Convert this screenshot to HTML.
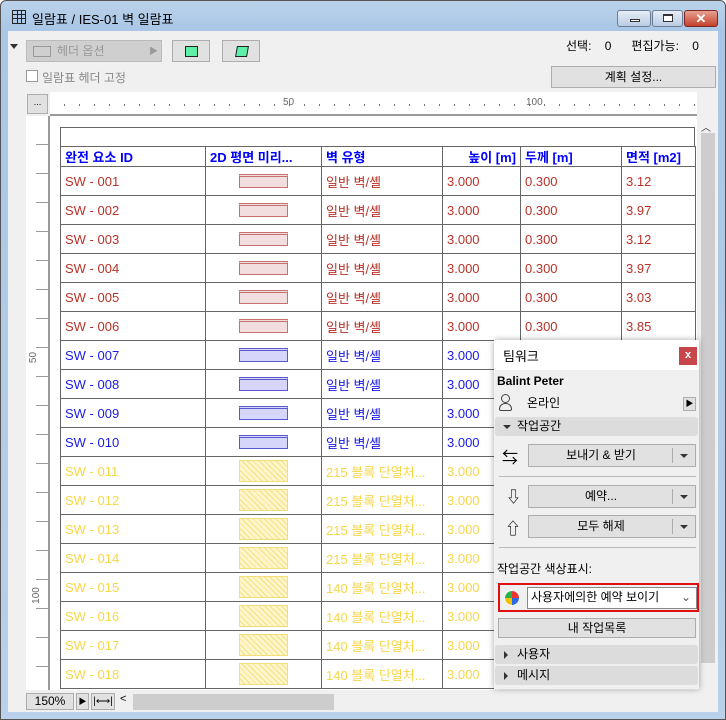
<!DOCTYPE html><html><head><meta charset="utf-8"><style>
*{margin:0;padding:0;box-sizing:border-box}
body{width:726px;height:720px;overflow:hidden;font-family:"Liberation Sans","Noto Sans CJK KR",sans-serif;font-size:12px;background:#fff;position:relative}
.a{position:absolute}
.win{left:0;top:0;width:726px;height:720px;background:linear-gradient(#bcd2ea,#a9c6e6 30px,#b9d1ea);border:1px solid #555;border-radius:6px 6px 0 0}
.btn{background:#e1e1e1;border:1px solid #adadad;text-align:center}
table{border-collapse:collapse;table-layout:fixed;font-size:13px}
td{border:1px solid #666;height:29px;padding:0 4px;white-space:nowrap;overflow:hidden}
tr.h td{height:19px;color:#00f;font-weight:bold;font-size:13px}
.r td{color:#b83228}.b td{color:#1a1ae6}.y td{color:#f7d64a}
.pv{display:block;margin:0 auto;width:49px;height:14px}
.pr{border:1px solid #c87070;background:#f2dede;border-top-width:3px;border-top-style:double}
.pb{border:1px solid #5a5acc;background:#d6d6fa;border-top-width:3px;border-top-style:double}
.py{border:1px solid #f3de7a;background:repeating-linear-gradient(45deg,#fff6cc 0 3px,#f5df80 3px 4px);height:22px}
.sec{background:#dcdcdc;border-radius:3px;height:19px;font-size:12px;padding-left:22px;line-height:19px}
.dd{background:#e1e1e1;border:1px solid #adadad;text-align:center;line-height:21px;font-size:12px}
.dd:after{content:"";position:absolute;right:0;top:3px;width:22px;height:15px;border-left:1px solid #adadad}
.tri{position:absolute;right:7px;top:9px;border:4px solid transparent;border-top:4px solid #333;border-bottom:0}
</style></head><body>
<div class="a win"></div>
<div class="a" style="left:12px;top:10px;width:14px;height:14px;border:1px solid #222;background:linear-gradient(90deg,transparent 4px,#222 4px 5px,transparent 5px 8px,#222 8px 9px,transparent 9px),linear-gradient(transparent 3px,#222 3px 4px,transparent 4px 7px,#222 7px 8px,transparent 8px)"></div>
<div class="a" style="left:32px;top:9px;font-size:13px">일람표 / IES-01 벽 일람표</div>
<div class="a" style="left:617px;top:10px;width:34px;height:17px;border:1px solid #6b7d96;border-radius:3px;background:linear-gradient(#e6eef8,#b9cbe2)"><div class="a" style="left:12px;top:8px;width:10px;height:3px;border:1px solid #333;background:#fff"></div></div>
<div class="a" style="left:652px;top:10px;width:31px;height:17px;border:1px solid #6b7d96;border-radius:3px;background:linear-gradient(#e6eef8,#b9cbe2)"><div class="a" style="left:10px;top:3px;width:10px;height:8px;border:1px solid #333;border-top-width:2px;background:#fff"></div></div>
<div class="a" style="left:684px;top:10px;width:34px;height:17px;border:1px solid #7a2a20;border-radius:3px;background:linear-gradient(#e8a090,#c4412c);color:#fff;text-align:center;font-weight:bold;font-size:13px;line-height:15px">✕</div>
<div class="a" style="left:8px;top:31px;width:710px;height:681px;background:#f0f0f0"></div>
<div class="a" style="left:10px;top:44px;border:4px solid transparent;border-top:5px solid #333"></div>
<div class="a" style="left:26px;top:40px;width:136px;height:22px;background:#cfcfcf;border:1px solid #bbb;color:#999;padding-left:30px;line-height:20px">헤더 옵션<span style="position:absolute;right:3px;top:0;font-size:9px">▶</span><span class="a" style="left:6px;top:5px;width:18px;height:11px;border:1px solid #999"></span></div>
<div class="a btn" style="left:172px;top:40px;width:38px;height:22px"><div class="a" style="left:12px;top:5px;width:13px;height:11px;background:#5ef0a8;border:1px solid #222"></div></div>
<div class="a btn" style="left:222px;top:40px;width:38px;height:22px"><div class="a" style="left:13px;top:5px;width:12px;height:11px;background:#5ef0a8;border:1px solid #222;transform:skewX(-10deg)"></div></div>
<div class="a" style="left:26px;top:70px;width:12px;height:12px;border:1px solid #999;background:#fff"></div>
<div class="a" style="left:42px;top:69px;color:#888">일람표 헤더 고정</div>
<div class="a" style="left:566px;top:37px">선택:&nbsp;&nbsp;&nbsp;&nbsp;0&nbsp;&nbsp;&nbsp;&nbsp;&nbsp;&nbsp;편집가능:&nbsp;&nbsp;&nbsp;&nbsp;0</div>
<div class="a btn" style="left:551px;top:66px;width:165px;height:22px;line-height:20px">계획 설정...</div>
<!-- rulers -->
<div class="a" style="left:50px;top:92px;width:647px;height:24px;background:#fff;border-bottom:2px solid #999;background-image:repeating-linear-gradient(90deg,transparent 0 14px,#777 14px 15px);background-size:100% 2px;background-repeat:no-repeat;background-position:0 12px"></div>
<div class="a" style="left:283px;top:97px;font-size:10px;color:#666">50</div>
<div class="a" style="left:526px;top:97px;font-size:10px;color:#666">100</div>
<div class="a btn" style="left:27px;top:94px;width:21px;height:20px;font-size:9px;line-height:14px">...</div>
<div class="a" style="left:26px;top:116px;width:24px;height:574px;background:#fff;border-right:2px solid #999;background-image:repeating-linear-gradient(transparent 0 28px,#999 28px 29px);background-size:14px 100%;background-repeat:no-repeat;background-position:10px 0"></div>
<div class="a" style="left:28px;top:590px;font-size:10px;color:#666;transform:rotate(-90deg)">100</div>
<div class="a" style="left:28px;top:352px;font-size:10px;color:#666;transform:rotate(-90deg)">50</div>
<div class="a" style="left:50px;top:116px;width:647px;height:574px;background:#fff"></div>
<div class="a" style="left:60px;top:127px;width:635px;height:20px;border:1px solid #666;border-bottom:0"></div>
<table class="a" style="left:60px;top:146px;width:635px">
<colgroup><col style="width:145px"><col style="width:116px"><col style="width:121px"><col style="width:78px"><col style="width:101px"><col style="width:74px"></colgroup>
<tr class="h"><td>완전 요소 ID</td><td>2D 평면 미리...</td><td>벽 유형</td><td style="text-align:right">높이 [m]</td><td>두께 [m]</td><td>면적 [m2]</td></tr>
<tr class="r"><td>SW - 001</td><td><span class="pv pr"></span></td><td>일반 벽/셸</td><td>3.000</td><td>0.300</td><td>3.12</td></tr>
<tr class="r"><td>SW - 002</td><td><span class="pv pr"></span></td><td>일반 벽/셸</td><td>3.000</td><td>0.300</td><td>3.97</td></tr>
<tr class="r"><td>SW - 003</td><td><span class="pv pr"></span></td><td>일반 벽/셸</td><td>3.000</td><td>0.300</td><td>3.12</td></tr>
<tr class="r"><td>SW - 004</td><td><span class="pv pr"></span></td><td>일반 벽/셸</td><td>3.000</td><td>0.300</td><td>3.97</td></tr>
<tr class="r"><td>SW - 005</td><td><span class="pv pr"></span></td><td>일반 벽/셸</td><td>3.000</td><td>0.300</td><td>3.03</td></tr>
<tr class="r"><td>SW - 006</td><td><span class="pv pr"></span></td><td>일반 벽/셸</td><td>3.000</td><td>0.300</td><td>3.85</td></tr>
<tr class="b"><td>SW - 007</td><td><span class="pv pb"></span></td><td>일반 벽/셸</td><td>3.000</td><td>0.300</td><td>3.12</td></tr>
<tr class="b"><td>SW - 008</td><td><span class="pv pb"></span></td><td>일반 벽/셸</td><td>3.000</td><td>0.300</td><td>3.97</td></tr>
<tr class="b"><td>SW - 009</td><td><span class="pv pb"></span></td><td>일반 벽/셸</td><td>3.000</td><td>0.300</td><td>3.12</td></tr>
<tr class="b"><td>SW - 010</td><td><span class="pv pb"></span></td><td>일반 벽/셸</td><td>3.000</td><td>0.300</td><td>3.97</td></tr>
<tr class="y"><td>SW - 011</td><td><span class="pv py"></span></td><td>215 블록 단열처...</td><td>3.000</td><td>0.300</td><td>3.12</td></tr>
<tr class="y"><td>SW - 012</td><td><span class="pv py"></span></td><td>215 블록 단열처...</td><td>3.000</td><td>0.300</td><td>3.12</td></tr>
<tr class="y"><td>SW - 013</td><td><span class="pv py"></span></td><td>215 블록 단열처...</td><td>3.000</td><td>0.300</td><td>3.12</td></tr>
<tr class="y"><td>SW - 014</td><td><span class="pv py"></span></td><td>215 블록 단열처...</td><td>3.000</td><td>0.300</td><td>3.12</td></tr>
<tr class="y"><td>SW - 015</td><td><span class="pv py"></span></td><td>140 블록 단열처...</td><td>3.000</td><td>0.300</td><td>3.12</td></tr>
<tr class="y"><td>SW - 016</td><td><span class="pv py"></span></td><td>140 블록 단열처...</td><td>3.000</td><td>0.300</td><td>3.12</td></tr>
<tr class="y"><td>SW - 017</td><td><span class="pv py"></span></td><td>140 블록 단열처...</td><td>3.000</td><td>0.300</td><td>3.12</td></tr>
<tr class="y"><td>SW - 018</td><td><span class="pv py"></span></td><td>140 블록 단열처...</td><td>3.000</td><td>0.300</td><td>3.12</td></tr>
</table>
<!-- scrollbars -->
<div class="a" style="left:697px;top:116px;width:19px;height:574px;background:#f0f0f0"></div>
<div class="a" style="left:701px;top:119px;font-size:10px;color:#333">︿</div>
<div class="a" style="left:701px;top:133px;width:14px;height:530px;background:#cdcdcd"></div>
<div class="a" style="left:26px;top:692px;width:690px;height:18px;background:#f0f0f0"></div>
<div class="a btn" style="left:26px;top:693px;width:48px;height:17px;line-height:15px">150%</div>
<div class="a btn" style="left:76px;top:693px;width:13px;height:17px;font-size:8px;line-height:15px">▶</div>
<div class="a btn" style="left:91px;top:693px;width:24px;height:17px;font-size:10px;line-height:15px">|⟷|</div>
<div class="a" style="left:120px;top:693px;font-size:11px">&lt;</div>
<div class="a" style="left:133px;top:694px;width:201px;height:16px;background:#cdcdcd"></div>
<!-- teamwork panel -->
<div class="a" style="left:494px;top:340px;width:205px;height:349px;background:#f0f0f0;box-shadow:0 0 6px rgba(0,0,0,.35)"></div>
<div class="a" style="left:494px;top:340px;width:205px;height:30px;background:#fff"></div>
<div class="a" style="left:503px;top:346px;font-size:13px">팀워크</div>
<div class="a" style="left:679px;top:347px;width:18px;height:18px;background:#c6464a;color:#fff;text-align:center;font-size:11px;font-weight:bold;line-height:17px">x</div>
<div class="a" style="left:497px;top:374px;font-weight:bold">Balint Peter</div>
<div class="a" style="left:501px;top:394px;width:9px;height:9px;border:1px solid #444;border-radius:50%"></div>
<div class="a" style="left:499px;top:403px;width:13px;height:8px;border:1px solid #444;border-radius:6px 6px 2px 2px"></div>
<div class="a" style="left:527px;top:394px">온라인</div>
<div class="a btn" style="left:683px;top:397px;width:13px;height:14px;font-size:8px;line-height:12px">▶</div>
<div class="a sec" style="left:495px;top:417px;width:203px">작업공간<span class="a" style="left:8px;top:8px;border:4px solid transparent;border-top:4px solid #333;border-bottom:0"></span></div>
<div class="a" style="left:502px;top:444px;font-size:16px">⇆</div>
<div class="a dd" style="left:528px;top:444px;width:168px;height:23px;padding-right:22px">보내기 &amp; 받기<span class="tri"></span></div>
<div class="a" style="left:499px;top:476px;width:197px;height:1px;background:#bbb"></div>
<div class="a" style="left:506px;top:486px;font-size:15px">⇩</div>
<div class="a dd" style="left:528px;top:485px;width:168px;height:23px;padding-right:22px">예약...<span class="tri"></span></div>
<div class="a" style="left:505px;top:515px;font-size:16px">⇧</div>
<div class="a dd" style="left:528px;top:515px;width:168px;height:23px;padding-right:22px">모두 해제<span class="tri"></span></div>
<div class="a" style="left:499px;top:547px;width:197px;height:1px;background:#bbb"></div>
<div class="a" style="left:497px;top:560px">작업공간 색상표시:</div>
<div class="a" style="left:498px;top:583px;width:201px;height:29px;border:2px solid #e01010"></div>
<div class="a" style="left:504px;top:590px;width:16px;height:16px;border-radius:50%;background:conic-gradient(#e33 0 25%,#2a6de0 25% 50%,#f5c000 50% 75%,#2bb04a 75%);border:1px solid #fff"></div>
<div class="a" style="left:527px;top:587px;width:170px;height:22px;background:#fff;border:1px solid #888;padding-left:3px;line-height:19px">사용자에의한 예약 보이기<span class="a" style="right:5px;top:0;color:#555">⌄</span></div>
<div class="a btn" style="left:498px;top:618px;width:198px;height:20px;line-height:18px">내 작업목록</div>
<div class="a sec" style="left:495px;top:645px;width:203px">사용자<span class="a" style="left:9px;top:6px;border:4px solid transparent;border-left:4px solid #333;border-right:0"></span></div>
<div class="a sec" style="left:495px;top:666px;width:203px">메시지<span class="a" style="left:9px;top:6px;border:4px solid transparent;border-left:4px solid #333;border-right:0"></span></div>
</body></html>
